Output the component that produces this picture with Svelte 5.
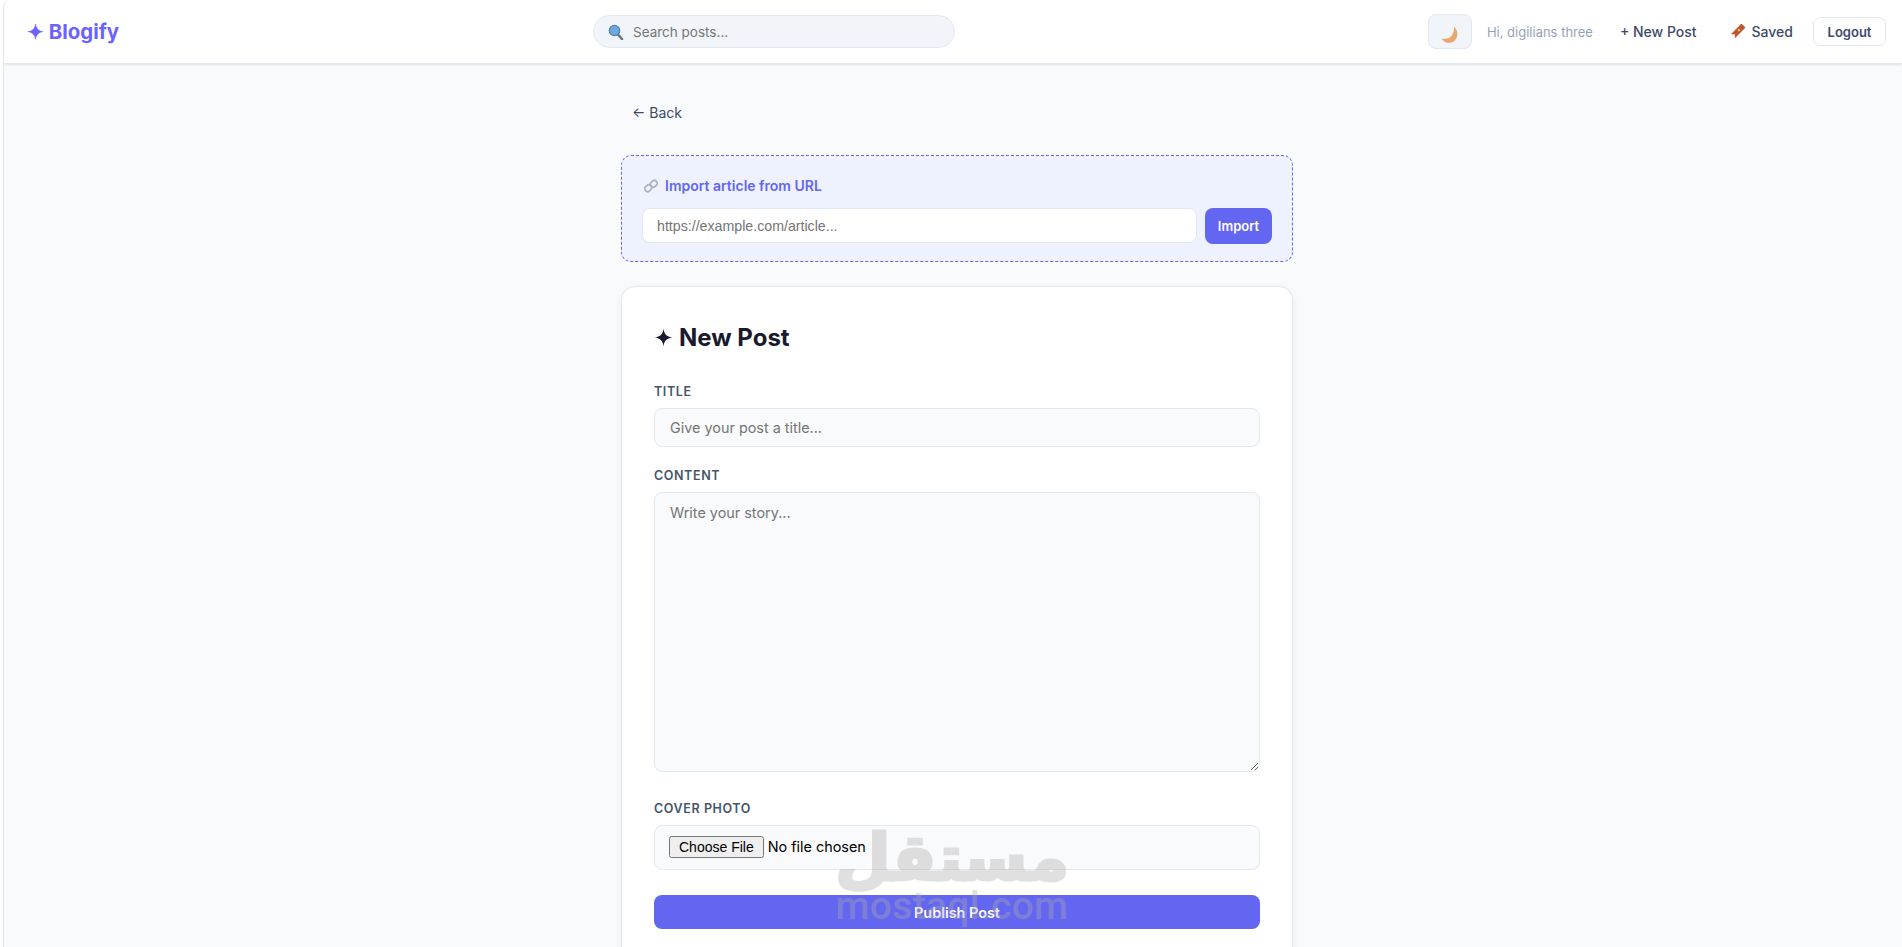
<script>
	const sparkle = 'M12 1 C13 8 16 11 23 12 C16 13 13 16 12 23 C11 16 8 13 1 12 C8 11 11 8 12 1 Z';
</script>

<div class="page">
	<nav class="navbar">
		<a class="brand" href="#home">✦ Blogify</a>
		<div class="search">
			<svg class="glass" viewBox="0 0 16 16" width="16" height="16" aria-hidden="true">
				<path d="M10 10.5 L14 15" stroke="#6b7280" stroke-width="2.6" stroke-linecap="round" />
				<circle cx="6.5" cy="6.5" r="5.2" fill="#6aa9e4" stroke="#5b7fa6" stroke-width="1.2" />
			</svg>
			<input type="text" placeholder="Search posts..." />
		</div>
		<div class="nav-right">
			<button class="theme" aria-label="Toggle theme">
				<svg viewBox="0 0 16 16" width="18" height="18" aria-hidden="true">
					<path d="M11.5 0.5 C16 5 15.5 11 11 14 C7.5 16 3 15 0.5 11 C4.5 12 7.5 11 9.5 8.5 C11 6.5 12 3.5 11.5 0.5 Z" fill="#e9a76f" />
				</svg>
			</button>
			<span class="hi">Hi, digilians three</span>
			<a class="nav-link" href="#new">+ New Post</a>
			<a class="nav-link saved" href="#saved">
				<svg viewBox="0 0 16 16" width="15" height="15" aria-hidden="true">
					<path d="M5 -1 H11 V15 L8 12 L5 15 Z" fill="#c2542b" transform="rotate(45 8 8)" />
					<circle cx="9.5" cy="6.5" r="1.3" fill="#f3c9a8" />
				</svg>
				Saved
			</a>
			<button class="logout">Logout</button>
		</div>
	</nav>

	<main class="main">
		<div class="container">
			<a class="back" href="#back">← Back</a>

			<section class="import">
				<div class="import-title">
					<svg viewBox="0 0 16 16" width="14" height="14" aria-hidden="true">
						<g fill="none" stroke="#b0b3bb" stroke-width="2">
							<rect x="8" y="1.5" width="6.5" height="8" rx="3" transform="rotate(45 11.2 5.5)" />
							<rect x="1.5" y="6.5" width="6.5" height="8" rx="3" transform="rotate(45 4.8 10.5)" />
						</g>
					</svg>
					Import article from URL
				</div>
				<div class="import-row">
					<input type="text" placeholder="https://example.com/article..." />
					<button>Import</button>
				</div>
			</section>

			<section class="card">
				<h1><svg viewBox="0 0 24 24" width="19" height="19" aria-hidden="true"><path d={sparkle} fill="#1a1a2e" /></svg> New Post</h1>

				<div class="field">
					<label for="title">TITLE</label>
					<input id="title" type="text" placeholder="Give your post a title..." />
				</div>
				<div class="field">
					<label for="content">CONTENT</label>
					<textarea id="content" placeholder="Write your story..."></textarea>
				</div>
				<div class="field cover">
					<label for="cover">COVER PHOTO</label>
					<input id="cover" type="file" />
				</div>
				<button class="publish">Publish Post</button>
			</section>
		</div>
	</main>

	<div class="watermark" aria-hidden="true">
		<div class="wm-ar">مستقل</div>
		<div class="wm-en">mostaql.com</div>
	</div>
</div>

<style>
	:global(body) {
		margin: 0;
		background: #fff;
		font-family: Inter, "Noto Sans", sans-serif;
	}

	.page {
		margin-left: 3px;
		height: 947px;
		overflow: hidden;
		background: #f9fafc;
		border-left: 1px solid #e2e6ef;
		border-top-left-radius: 8px;
		position: relative;
	}

	.navbar {
		height: 64px;
		box-sizing: border-box;
		background: #fff;
		border-bottom: 1px solid #e2e8f0;
		box-shadow: 0 1px 2px rgba(0, 0, 0, 0.1);
		display: flex;
		align-items: center;
		padding: 0 16px 0 23px;
	}

	.brand {
		font-size: 20.4px;
		font-weight: 700;
		color: #6c63ff;
		text-decoration: none;
		width: 566px;
		flex: none;
	}

	.search {
		width: 362px;
		height: 33px;
		box-sizing: border-box;
		background: #f1f5f9;
		border: 1px solid #e2e8f0;
		border-radius: 17px;
		display: flex;
		align-items: center;
		gap: 7px;
		padding: 0 14px;
	}

	.search input {
		border: none;
		background: transparent;
		outline: none;
		font: 13.5px Inter, sans-serif;
		flex: 1;
		min-width: 0;
	}

	.nav-right {
		margin-left: auto;
		display: flex;
		align-items: center;
	}

	.theme {
		width: 44px;
		height: 35px;
		background: #f1f5f9;
		border: 1px solid #e2e8f0;
		border-radius: 8px;
		display: flex;
		align-items: center;
		justify-content: center;
		padding: 6px 0 0;
		margin-right: 15px;
	}

	.hi {
		font-size: 13px;
		color: #94a3b8;
		margin-right: 13px;
	}

	.nav-link {
		font-size: 14px;
		font-weight: 500;
		color: #3d4a6b;
		text-decoration: none;
		padding: 6px 14px;
		display: flex;
		align-items: center;
		gap: 5px;
	}

	.saved {
		margin-left: 5px;
		gap: 7px;
	}

	.logout {
		font: 600 13px Inter, sans-serif;
		color: #3d4a6b;
		background: #fff;
		border: 1px solid #e2e8f0;
		border-radius: 7px;
		height: 29px;
		width: 73px;
		margin-left: 6px;
	}

	.main {
		padding: 34px 0 0 8px;
	}

	.container {
		width: 672px;
		margin: 0 auto;
	}

	.back {
		display: block;
		font-size: 14px;
		color: #3d4a6b;
		text-decoration: none;
		padding: 6px 11px;
		line-height: 17px;
		margin-bottom: 28px;
	}

	.import {
		height: 107px;
		box-sizing: border-box;
		background: #eef2ff;
		border: 1px dashed #6366f1;
		border-radius: 10px;
		padding: 21px 20px 20px;
		margin-bottom: 24px;
	}

	.import-title {
		font-size: 14px;
		font-weight: 600;
		color: #6366f1;
		display: flex;
		align-items: center;
		gap: 7px;
		line-height: 17px;
		margin-bottom: 14px;
		padding-left: 2px;
	}

	.import-row {
		display: flex;
		gap: 8px;
	}

	.import-row input {
		flex: 1;
		height: 35px;
		box-sizing: border-box;
		border: 1px solid #e2e8f0;
		border-radius: 8px;
		background: #fff;
		padding: 0 14px;
		font: 14.2px "Liberation Sans", sans-serif;
		outline: none;
	}

	.import-row button {
		width: 67px;
		height: 36px;
		background: #6366f1;
		color: #fff;
		border: none;
		border-radius: 8px;
		font: 600 13px Inter, sans-serif;
	}

	.card {
		background: #fff;
		border: 1px solid #e2e8f0;
		border-radius: 14px;
		box-shadow: 0 2px 8px rgba(0, 0, 0, 0.06);
		padding: 36px 32px 32px;
		height: 800px;
		box-sizing: border-box;
	}

	h1 {
		margin: 0 0 32px;
		font-size: 24px;
		font-weight: 700;
		color: #1a1a2e;
		line-height: 29px;
		display: flex;
		align-items: center;
		gap: 6px;
	}

	.field {
		margin-bottom: 21px;
	}

	label {
		display: block;
		font-size: 12.5px;
		font-weight: 600;
		letter-spacing: 0.6px;
		color: #475569;
		line-height: 15px;
		margin-bottom: 9px;
	}

	.field input[type="text"], textarea {
		display: block;
		width: 100%;
		box-sizing: border-box;
		background: #f9fafc;
		border: 1px solid #e2e8f0;
		border-radius: 8px;
		padding: 11px 15px;
		font: 14.4px Inter, sans-serif;
		outline: none;
	}

	.field input[type="text"] {
		height: 39px;
		padding: 0 15px;
	}

	textarea {
		height: 280px;
		line-height: 18px;
		resize: vertical;
	}

	.cover {
		margin-top: 29px;
		margin-bottom: 25px;
	}

	.field input[type="file"] {
		display: block;
		width: 100%;
		box-sizing: border-box;
		background: #f9fafc;
		border: 1px solid #e2e8f0;
		border-radius: 8px;
		padding: 10px 14px;
		height: 45px;
		font: 14.4px Inter, sans-serif;
	}

	.field input[type="file"]::file-selector-button {
		font: 14px "Liberation Sans", sans-serif;
		padding: 1px 8px;
	}

	.publish {
		display: block;
		width: 100%;
		height: 34px;
		background: #6366f1;
		color: #fff;
		border: none;
		border-radius: 8px;
		font: 600 14.4px Inter, sans-serif;
	}

	.watermark {
		position: absolute;
		left: 830px;
		top: 830px;
		width: 236px;
		text-align: center;
		color: rgb(172, 172, 172);
		opacity: 0.36;
		pointer-events: none;
	}

	.wm-ar {
		font: 700 64px "DejaVu Sans", sans-serif;
		line-height: 56px;
		-webkit-text-stroke: 3px rgb(172, 172, 172);
	}

	.wm-en {
		font: 500 39px Roboto, sans-serif;
		line-height: 40px;
		letter-spacing: 0.3px;
	}
</style>
